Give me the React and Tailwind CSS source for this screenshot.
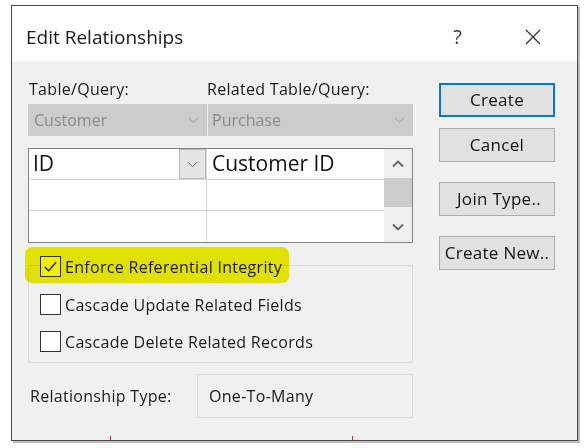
import React from 'react';

const UI = { fontFamily: '"Open Sans", "Noto Sans", sans-serif' };

function ChevronDown({ className = '', stroke = '#9a9a9a', width = 1 }) {
  return (
    <svg viewBox="0 0 12 8" className={className} fill="none">
      <polyline points="1,1.5 6,6.5 11,1.5" stroke={stroke} strokeWidth={width} />
    </svg>
  );
}

function ChevronUp({ className = '', stroke = '#606060', width = 1.8 }) {
  return (
    <svg viewBox="0 0 12 8" className={className} fill="none">
      <polyline points="1,6.5 6,1.5 11,6.5" stroke={stroke} strokeWidth={width} />
    </svg>
  );
}

function Checkbox({ checked }) {
  return (
    <span className="w-[21px] h-[21px] border border-[#333] bg-white flex items-center justify-center shrink-0">
      {checked && (
        <svg viewBox="0 0 16 16" className="w-[15px] h-[15px]" fill="none">
          <polyline points="2,8.5 6,12.5 14,3.5" stroke="#222" strokeWidth="1.4" />
        </svg>
      )}
    </span>
  );
}

function DlgButton({ children, primary }) {
  return (
    <div
      className={
        'h-[34px] w-[116px] flex items-center justify-center bg-[#e1e1e1] text-[17px] tracking-[0.3px] text-[#111] ' +
        (primary ? 'border-2 border-[#0078d7]' : 'border border-[#adadad]')
      }
    >
      {children}
    </div>
  );
}

export default function App() {
  return (
    <div className="w-[586px] h-[448px] bg-white pl-[11px] pt-[5px]" style={UI}>
      <div className="relative w-[567px] h-[436px] border border-[#4a4a4a] shadow-[2px_2px_0_#bdbdbd] flex flex-col">
        {/* title bar */}
        <div className="h-[55px] bg-white flex items-center pl-[14px] pr-[36px] pt-[7px] shrink-0">
          <span className="text-[19px] text-[#1a1a1a] flex-1">Edit Relationships</span>
          <span className="text-[20px] text-[#333] mr-[63px]">?</span>
          <svg viewBox="0 0 16 16" className="w-[16px] h-[16px]" fill="none">
            <path d="M1 1L15 15M15 1L1 15" stroke="#333" strokeWidth="1.3" />
          </svg>
        </div>

        {/* body */}
        <div className="relative flex-1 bg-[#f0f0f0] flex pl-[16px] pt-[17px] gap-[26px]">
          <div className="w-[385px] flex flex-col">
            <div className="flex text-[16px] tracking-[0.3px] text-[#1a1a1a] h-[26px] leading-[22px]">
              <span className="w-[179px] pl-[1px]">Table/Query:</span>
              <span>Related Table/Query:</span>
            </div>
            <div className="flex h-[32px] text-[16px] text-[#8a8a8a] gap-[1px]">
              <div className="w-[179px] bg-[#cccccc] flex items-center pl-[6px] pr-[8px]">
                <span className="flex-1">Customer</span>
                <ChevronDown className="w-[11px] h-[8px]" />
              </div>
              <div className="flex-1 bg-[#cccccc] flex items-center pl-[4px] pr-[8px]">
                <span className="flex-1">Purchase</span>
                <ChevronDown className="w-[11px] h-[8px]" />
              </div>
            </div>

            {/* field grid */}
            <div className="mt-[12px] h-[95px] border border-[#828282] bg-white flex">
              <div className="flex-1 flex flex-col text-[21px] text-[#111]">
                <div className="h-[31px] flex border-b border-[#d6d6d6]">
                  <div className="w-[178px] flex items-center pl-[4px] border-r border-[#d6d6d6]">
                    <span className="flex-1">ID</span>
                    <div className="w-[27px] h-[30px] bg-[#e5e5e5] border border-[#bcbcbc] flex items-center justify-center">
                      <ChevronDown className="w-[11px] h-[7px]" stroke="#555" />
                    </div>
                  </div>
                  <div className="flex-1 flex items-center pl-[5px]">Customer ID</div>
                </div>
                <div className="h-[31px] flex border-b border-[#d6d6d6]">
                  <div className="w-[178px] border-r border-[#d6d6d6]" />
                </div>
                <div className="flex-1 flex">
                  <div className="w-[178px] border-r border-[#d6d6d6]" />
                </div>
              </div>
              <div className="w-[28px] bg-[#f0f0f0] flex flex-col">
                <div className="h-[29px] flex items-center justify-center">
                  <ChevronUp className="w-[12px] h-[8px]" />
                </div>
                <div className="h-[29px] bg-[#cdcdcd]" />
                <div className="flex-1 flex items-center justify-center pt-[4px]">
                  <ChevronDown className="w-[12px] h-[8px]" stroke="#606060" width={1.8} />
                </div>
              </div>
            </div>

            {/* options group */}
            <div className="relative mt-[22px] h-[98px] border border-[#dcdcdc] text-[16px] tracking-[0.3px] text-[#1a1a1a] flex flex-col pl-[11px]">
              <div className="-mt-[10px] h-[21px] flex items-center gap-[4px] w-fit bg-[#f0f0f0]">
                <Checkbox checked />
                <span>Enforce Referential Integrity</span>
              </div>
              <div className="mt-[17px] h-[21px] flex items-center gap-[4px]">
                <Checkbox />
                <span>Cascade Update Related Fields</span>
              </div>
              <div className="mt-[16px] h-[21px] flex items-center gap-[4px]">
                <Checkbox />
                <span>Cascade Delete Related Records</span>
              </div>
              {/* marker highlight */}
              <div className="absolute left-[-4px] top-[-19px] w-[264px] h-[36px] bg-[#f0f000] rounded-[7px] mix-blend-multiply pointer-events-none" />
            </div>

            <div className="mt-[11px] flex items-center text-[16px] tracking-[0.3px] text-[#1a1a1a]">
              <span className="w-[169px] pl-[2px]">Relationship Type:</span>
              <div className="flex-1 h-[44px] border border-[#dcdcdc] flex items-center pl-[11px]">One-To-Many</div>
            </div>
          </div>

          <div className="flex flex-col pt-[5px]">
            <DlgButton primary>Create</DlgButton>
            <div className="mt-[11px]">
              <DlgButton>Cancel</DlgButton>
            </div>
            <div className="mt-[20px]">
              <DlgButton>
                <span className="pl-[4px]">Join Type..</span>
              </DlgButton>
            </div>
            <div className="mt-[20px]">
              <DlgButton>Create New..</DlgButton>
            </div>
          </div>

          <span className="absolute left-[98px] bottom-0 w-[1px] h-[4px] bg-[#c03030]" />
          <span className="absolute left-[340px] bottom-0 w-[1px] h-[4px] bg-[#c03030]" />
        </div>
      </div>
    </div>
  );
}
